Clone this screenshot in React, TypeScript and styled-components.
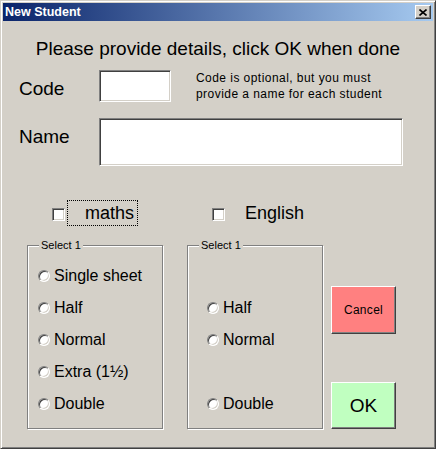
import React from 'react'
import styled, { createGlobalStyle } from 'styled-components'

const GlobalStyle = createGlobalStyle`
  html, body {
    margin: 0;
    padding: 0;
    background: #d4d0c8;
  }
  body {
    font-family: 'Liberation Sans', Arial, sans-serif;
    color: #000;
  }
`

const Window = styled.div`
  box-sizing: border-box;
  width: 436px;
  height: 449px;
  background: #d4d0c8;
  border: 1px solid;
  border-color: #d4d0c8 #404040 #404040 #d4d0c8;
  box-shadow: inset 1px 1px 0 #fff, inset -1px -1px 0 #808080;
  padding: 2px;
  display: flex;
  flex-direction: column;
`

const TitleBar = styled.div`
  height: 18px;
  display: flex;
  align-items: center;
  justify-content: space-between;
  padding: 0 2px 0 2px;
  background: linear-gradient(to right, #0a246a, #a6caf0);
`

const Title = styled.span`
  color: #fff;
  font-weight: bold;
  font-size: 12.5px;
`

const CloseButton = styled.div`
  box-sizing: border-box;
  width: 16px;
  height: 14px;
  display: flex;
  align-items: center;
  justify-content: center;
  background: #d4d0c8;
  border: 1px solid;
  border-color: #fff #404040 #404040 #fff;
  box-shadow: inset -1px -1px 0 #808080;
`

const Content = styled.div`
  display: flex;
  flex-direction: column;
`

const Heading = styled.h1`
  margin: 17px 0 0 0;
  font-size: 19px;
  font-weight: normal;
  line-height: 22px;
  text-align: center;
`

const FieldRow = styled.div<{ $top: number }>`
  display: flex;
  align-items: flex-start;
  padding-left: 16px;
  margin-top: ${(p) => p.$top}px;
`

const FieldLabel = styled.label`
  width: 80px;
  margin-top: 8px;
  font-size: 19px;
  line-height: 22px;
`

const TextBox = styled.div<{ $w: number; $h: number }>`
  box-sizing: border-box;
  width: ${(p) => p.$w}px;
  height: ${(p) => p.$h}px;
  background: #fff;
  border: 1px solid;
  border-color: #808080 #fff #fff #808080;
  box-shadow: inset 1px 1px 0 #404040, inset -1px -1px 0 #d4d0c8;
`

const Hint = styled.div`
  margin: 0 0 0 25px;
  font-size: 12px;
  letter-spacing: 0.45px;
  line-height: 16px;
`

const OptionsArea = styled.div`
  display: flex;
  align-items: flex-end;
  gap: 8px;
  margin-top: 34px;
  padding-left: 24px;
`

const Subjects = styled.div`
  display: grid;
  grid-template-columns: 136px 136px;
  column-gap: 24px;
  row-gap: 19px;
`

const CheckCell = styled.div`
  display: flex;
  align-items: center;
  padding-left: 25px;
  height: 26px;
`

const CheckBox = styled.span`
  box-sizing: border-box;
  width: 13px;
  height: 13px;
  margin-top: 2px;
  background: #fff;
  border: 1px solid;
  border-color: #808080 #fff #fff #808080;
  box-shadow: inset 1px 1px 0 #404040, inset -1px -1px 0 #d4d0c8;
`

const CheckText = styled.span<{ $focused?: boolean }>`
  box-sizing: border-box;
  height: 26px;
  margin-left: 2px;
  padding: 0 3px 0 17px;
  display: flex;
  align-items: center;
  border: 1px dotted ${(p) => (p.$focused ? '#000' : 'transparent')};
  font-size: 18px;
`

const Frame = styled.div`
  position: relative;
  box-sizing: border-box;
  height: 184px;
  border: 1px solid #808080;
  box-shadow: inset 1px 1px 0 #fff, 1px 1px 0 #fff;
  padding-top: 14px;
`

const Legend = styled.span`
  position: absolute;
  top: -7px;
  left: 11px;
  padding: 0 2px;
  background: #d4d0c8;
  font-size: 11px;
  line-height: 13px;
`

const RadioRow = styled.div<{ $indent: number }>`
  height: 32px;
  display: flex;
  align-items: center;
  padding-left: ${(p) => p.$indent}px;
`

const RadioDot = styled.span`
  box-sizing: border-box;
  width: 12px;
  height: 12px;
  border-radius: 50%;
  background: #fff;
  border: 1px solid;
  border-color: #808080 #fff #fff #808080;
  box-shadow: inset 1px 1px 0 #404040, inset -1px -1px 0 #d4d0c8;
`

const RadioText = styled.span`
  margin-left: 4px;
  font-size: 16px;
`

const ButtonColumn = styled.div`
  height: 184px;
  box-sizing: border-box;
  padding-top: 41px;
  display: flex;
  flex-direction: column;
  gap: 48px;
`

const PushButton = styled.div<{ $bg: string; $size: number; $h: number }>`
  box-sizing: border-box;
  width: 65px;
  height: ${(p) => p.$h}px;
  display: flex;
  align-items: center;
  justify-content: center;
  background: ${(p) => p.$bg};
  border: 1px solid;
  border-color: #fff #404040 #404040 #fff;
  box-shadow: inset -1px -1px 0 #808080;
  font-size: ${(p) => p.$size}px;
  letter-spacing: ${(p) => (p.$size < 15 ? '0.3px' : '0')};
`

const mathsOptions = ['Single sheet', 'Half', 'Normal', 'Extra (1½)', 'Double']
const englishOptions = [null, 'Half', 'Normal', null, 'Double']

const OptionFrame: React.FC<{ options: (string | null)[]; indent: number }> = ({ options, indent }) => (
  <Frame>
    <Legend>Select 1</Legend>
    {options.map((o, i) => (
      <RadioRow key={i} $indent={indent}>
        {o && (
          <>
            <RadioDot />
            <RadioText>{o}</RadioText>
          </>
        )}
      </RadioRow>
    ))}
  </Frame>
)

export default function App() {
  return (
    <>
      <GlobalStyle />
      <Window>
        <TitleBar>
          <Title>New Student</Title>
          <CloseButton>
            <svg width="8" height="7" viewBox="0 0 8 7">
              <path d="M0.5 0.5 L7.5 6.5 M7.5 0.5 L0.5 6.5" stroke="#000" strokeWidth="1.6" />
            </svg>
          </CloseButton>
        </TitleBar>
        <Content>
          <Heading>Please provide details, click OK when done</Heading>
          <FieldRow $top={10}>
            <FieldLabel>Code</FieldLabel>
            <TextBox $w={72} $h={32} />
            <Hint>
              Code is optional, but you must
              <br />
              provide a name for each student
            </Hint>
          </FieldRow>
          <FieldRow $top={16}>
            <FieldLabel>Name</FieldLabel>
            <TextBox $w={304} $h={48} />
          </FieldRow>
          <OptionsArea>
            <Subjects>
              <CheckCell>
                <CheckBox />
                <CheckText $focused>maths</CheckText>
              </CheckCell>
              <CheckCell>
                <CheckBox />
                <CheckText>English</CheckText>
              </CheckCell>
              <OptionFrame options={mathsOptions} indent={10} />
              <OptionFrame options={englishOptions} indent={19} />
            </Subjects>
            <ButtonColumn>
              <PushButton $bg="#ff8080" $size={12} $h={48}>Cancel</PushButton>
              <PushButton $bg="#c0ffc0" $size={19} $h={47}>OK</PushButton>
            </ButtonColumn>
          </OptionsArea>
        </Content>
      </Window>
    </>
  )
}
